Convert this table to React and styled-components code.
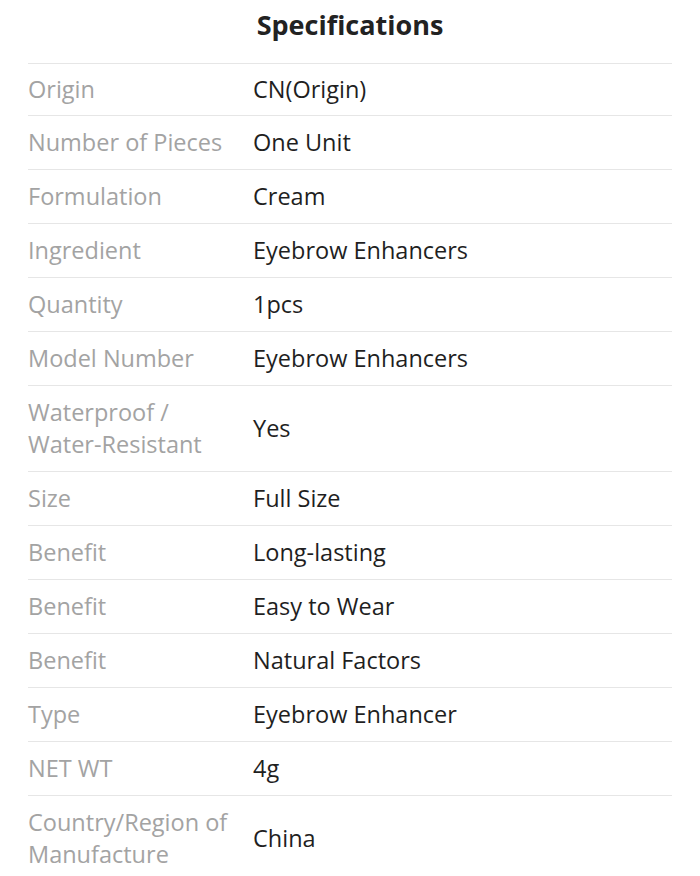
import styled, { createGlobalStyle } from 'styled-components';

const GlobalStyle = createGlobalStyle`
  body {
    margin: 0;
    background: #fff;
    font-family: "Open Sans", "Noto Sans", sans-serif;
  }
`;

const Container = styled.div`
  padding: 0 28px;
`;

const Title = styled.h2`
  margin: 0;
  height: 63px;
  display: flex;
  align-items: center;
  justify-content: center;
  padding-bottom: 15px;
  box-sizing: border-box;
  font-size: 27px;
  font-weight: 700;
  color: #222;
`;

const Row = styled.div`
  display: grid;
  grid-template-columns: 225px 1fr;
  align-items: center;
  padding: 10px 0 11px;
  border-top: 1px solid #e6e6e6;
  font-size: 23.5px;
  line-height: 32px;

  &:first-of-type {
    padding: 9px 0 10px;
  }
`;

const Label = styled.div`
  color: #a3a3a3;
  padding-right: 14px;
`;

const Value = styled.div`
  color: #1f1f1f;
`;

const specs = [
  ['Origin', 'CN(Origin)'],
  ['Number of Pieces', 'One Unit'],
  ['Formulation', 'Cream'],
  ['Ingredient', 'Eyebrow Enhancers'],
  ['Quantity', '1pcs'],
  ['Model Number', 'Eyebrow Enhancers'],
  ['Waterproof / Water-Resistant', 'Yes'],
  ['Size', 'Full Size'],
  ['Benefit', 'Long-lasting'],
  ['Benefit', 'Easy to Wear'],
  ['Benefit', 'Natural Factors'],
  ['Type', 'Eyebrow Enhancer'],
  ['NET WT', '4g'],
  ['Country/Region of Manufacture', 'China'],
];

const App = () => {
  return (
    <>
      <GlobalStyle />
      <Container>
        <Title>Specifications</Title>
        {specs.map(([label, value], i) => (
          <Row key={i}>
            <Label>{label}</Label>
            <Value>{value}</Value>
          </Row>
        ))}
      </Container>
    </>
  );
};

export default App;
